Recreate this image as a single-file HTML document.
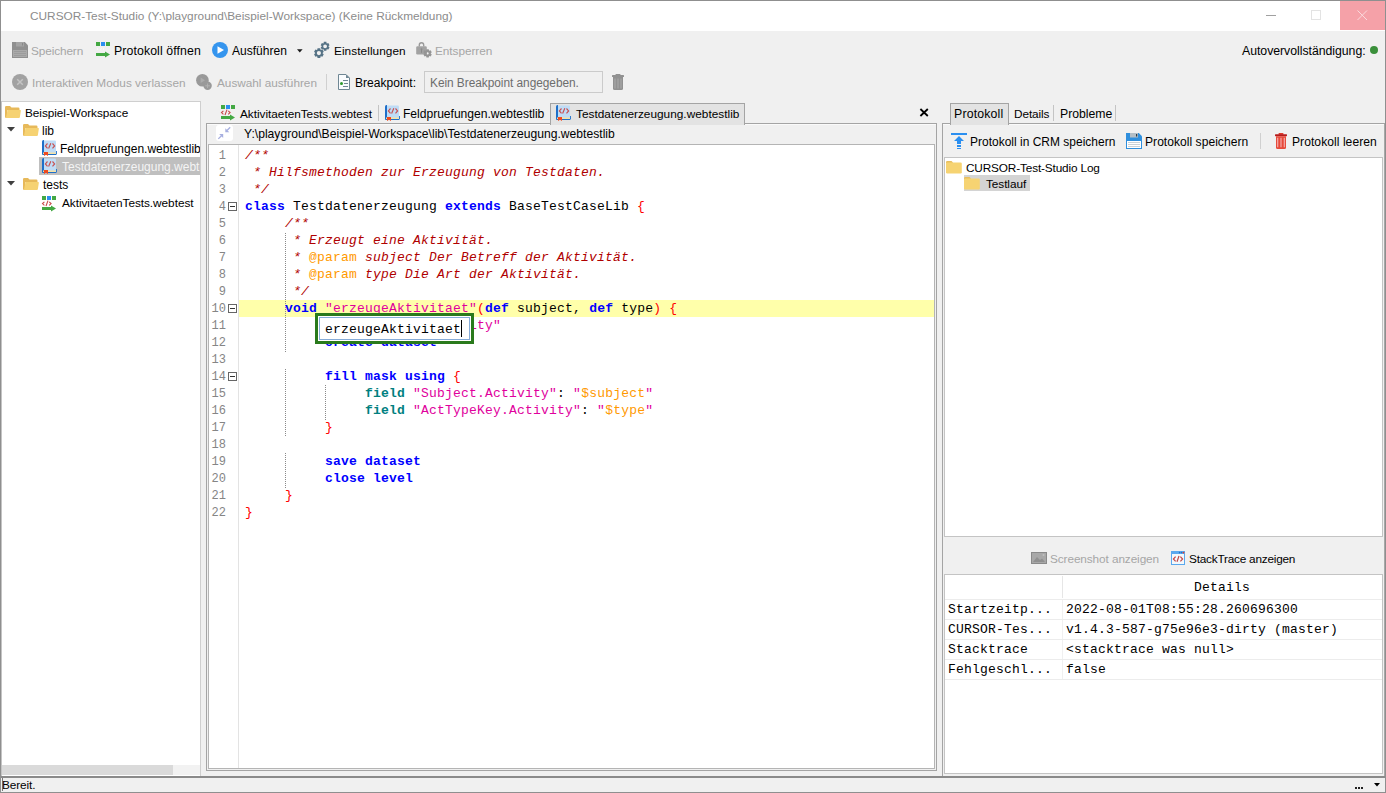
<!DOCTYPE html>
<html><head><meta charset="utf-8">
<style>
*{box-sizing:border-box;margin:0;padding:0}
html,body{width:1386px;height:793px;overflow:hidden;background:#f0f0f0}
body{position:relative;font-family:"Liberation Sans",sans-serif;font-size:12px;color:#000}
.a{position:absolute}
svg{position:absolute;overflow:visible}
.t{position:absolute;white-space:pre;line-height:20px;font-family:"Liberation Sans",sans-serif}
.code{position:absolute;white-space:pre;font-family:"Liberation Mono",monospace;font-size:13px;line-height:17px;letter-spacing:0.2px}
.k{color:#0000ff;font-weight:bold}
.f{color:#008080;font-weight:bold}
.s{color:#e0009c}
.v{color:#ff9900}
.b{color:#ff0000}
.c{color:#b00000;font-style:italic}
.p{color:#ff9900}
.ln{position:absolute;white-space:pre;font-family:"Liberation Mono",monospace;font-size:12px;line-height:17px;color:#858585}
</style></head><body>
<div class="a" style="left:0;top:0;width:1386px;height:793px;border:1px solid #8f8f8f"></div>
<div class="a" style="left:1px;top:1px;width:1384px;height:30px;background:#fff"></div>
<div class="t" style="left:30px;top:6px;font-size:11.83px;letter-spacing:0.0px;color:#8c8c8c;">CURSOR-Test-Studio (Y:\playground\Beispiel-Workspace) (Keine Rückmeldung)</div>
<div class="a" style="left:1266px;top:15px;width:10px;height:1px;background:#a0a0a0"></div>
<div class="a" style="left:1311px;top:10px;width:10px;height:10px;border:1px solid #e3e3e3"></div>
<div class="a" style="left:1340px;top:1px;width:45px;height:29px;background:#f5a1a8"></div>
<svg style="left:1357px;top:10px" width="11" height="11"><path d="M0.5 0.5L10 10M10 0.5L0.5 10" stroke="#fadadd" stroke-width="1"/></svg>
<svg style="left:12px;top:42px" width="16" height="16"><path d="M0 0H12.8L16 3.2V16H0Z" fill="#909090"/><rect x="4" y="0" width="8" height="4.5" fill="#a4a4a4"/><rect x="10" y="1" width="1" height="2.5" fill="#888"/><rect x="1" y="8" width="14" height="7" fill="#aaaaaa"/><path d="M2 9.5H14M2 11.5H14M2 13.5H14" stroke="#9c9c9c" stroke-width="1"/></svg>
<div class="t" style="left:31px;top:41px;font-size:11.8px;letter-spacing:-0.112px;color:#a6a6a6;">Speichern</div>
<svg style="left:96px;top:42px" width="16" height="16"><rect x="0" y="0" width="4" height="4" fill="#43a843"/><rect x="5" y="0" width="4" height="4" fill="#2b8ff0"/><rect x="10" y="0" width="4" height="4" fill="#43a843"/><path d="M0 11H9V9.5L14 12.5L9 15.5V14H0Z" fill="#43a843"/><path d="M2 6L1 7L2 8M6 6L4 8M7 6L8 7L7 8" stroke="#ffffff" stroke-width="0.8" fill="none" opacity="0.7"/></svg>
<div class="t" style="left:114px;top:41px;font-size:12.3px;letter-spacing:0.1px;color:#000;">Protokoll öffnen</div>
<svg style="left:212px;top:42px" width="16" height="16"><circle cx="8" cy="8" r="8" fill="#3595ee"/><path d="M5.5 4.2L12 8L5.5 11.8Z" fill="#fff"/></svg>
<div class="t" style="left:232px;top:41px;font-size:12.02px;letter-spacing:0.013px;color:#000;">Ausführen</div>
<svg style="left:297px;top:49px" width="6" height="4"><path d="M0 0.2H5.6L2.8 3.4Z" fill="#1a1a1a"/></svg>
<svg style="left:310px;top:40px" width="24" height="20"><path fill-rule="evenodd" d="M19.55 7.45 L18.33 9.58 L16.96 9.15 L16.64 9.33 L16.33 10.73 L13.87 10.73 L13.56 9.33 L13.24 9.15 L11.87 9.58 L10.65 7.45 L11.70 6.48 L11.70 6.12 L10.65 5.15 L11.87 3.02 L13.24 3.45 L13.56 3.27 L13.87 1.87 L16.33 1.87 L16.64 3.27 L16.96 3.45 L18.33 3.02 L19.55 5.15 L18.50 6.12 L18.50 6.48Z M17.00 6.30 A1.9 1.9 0 1 0 13.20 6.30 A1.9 1.9 0 1 0 17.00 6.30Z" fill="#557285"/><path fill-rule="evenodd" d="M13.74 14.35 L12.41 16.66 L10.92 16.20 L10.58 16.40 L10.23 17.92 L7.57 17.92 L7.22 16.40 L6.88 16.20 L5.39 16.66 L4.06 14.35 L5.21 13.30 L5.21 12.90 L4.06 11.85 L5.39 9.54 L6.88 10.00 L7.22 9.80 L7.57 8.28 L10.23 8.28 L10.58 9.80 L10.92 10.00 L12.41 9.54 L13.74 11.85 L12.59 12.90 L12.59 13.30Z M11.00 13.10 A2.1 2.1 0 1 0 6.80 13.10 A2.1 2.1 0 1 0 11.00 13.10Z" fill="#557285"/></svg>
<div class="t" style="left:334px;top:41px;font-size:11.8px;letter-spacing:0.067px;color:#000;">Einstellungen</div>
<svg style="left:416px;top:42px" width="18" height="18"><path d="M3.3 4.6V2.9A2.2 2.2 0 0 1 7.7 2.9V4.6" stroke="#9a9a9a" stroke-width="1.4" fill="none"/><rect x="0.2" y="4.2" width="10.6" height="8.4" rx="1.3" fill="#a2a2a2"/><rect x="5" y="7" width="1" height="3.8" fill="#8a8a8a"/><circle cx="5.5" cy="7.2" r="0.9" fill="#8a8a8a"/><path fill-rule="evenodd" d="M15.76 12.48 L14.62 14.47 L13.34 14.07 L13.04 14.24 L12.75 15.54 L10.45 15.54 L10.16 14.24 L9.86 14.07 L8.58 14.47 L7.44 12.48 L8.42 11.57 L8.42 11.23 L7.44 10.32 L8.58 8.33 L9.86 8.73 L10.16 8.56 L10.45 7.26 L12.75 7.26 L13.04 8.56 L13.34 8.73 L14.62 8.33 L15.76 10.32 L14.78 11.23 L14.78 11.57Z M12.70 11.40 A1.1 1.1 0 1 0 10.50 11.40 A1.1 1.1 0 1 0 12.70 11.40Z" fill="#959595"/></svg>
<div class="t" style="left:435px;top:41px;font-size:11.8px;letter-spacing:-0.056px;color:#a6a6a6;">Entsperren</div>
<div class="t" style="left:1242px;top:41px;font-size:12.3px;letter-spacing:-0.038px;color:#000;">Autovervollständigung:</div>
<div class="a" style="left:1370px;top:46px;width:8px;height:8px;border-radius:50%;background:#3a8f3a"></div>
<svg style="left:12px;top:74px" width="16" height="16"><circle cx="8" cy="8" r="8" fill="#a2a2a2"/><path d="M5.2 5.2L10.8 10.8M10.8 5.2L5.2 10.8" stroke="#c4c4c4" stroke-width="1.5"/></svg>
<div class="t" style="left:32px;top:73px;font-size:11.8px;letter-spacing:0.007px;color:#a6a6a6;">Interaktiven Modus verlassen</div>
<svg style="left:195px;top:74px" width="18" height="17"><circle cx="7.4" cy="6.3" r="6.3" fill="#999"/><path d="M5.6 3.6L10 6.3L5.6 9Z" fill="#acacac"/><circle cx="12.6" cy="11.8" r="4.2" fill="#999"/><path d="M12.6 9.5V14.1M10.3 11.8H14.9" stroke="#b4b4b4" stroke-width="0.9"/></svg>
<div class="t" style="left:217px;top:73px;font-size:11.8px;letter-spacing:-0.025px;color:#a6a6a6;">Auswahl ausführen</div>
<div class="a" style="left:326px;top:74px;width:1px;height:16px;background:#d0d0d0"></div>
<svg style="left:338px;top:74px" width="12" height="16"><path d="M0.5 0.5H8L11.5 4V15.5H0.5Z" fill="#fafcfe" stroke="#6f8794" stroke-width="1"/><path d="M8 0.5V4H11.5Z" fill="#6f8794"/><circle cx="3.5" cy="9.5" r="1.5" fill="#2e9a2e"/><path d="M5 6.5H10M6 9.5H10M5 12.5H10" stroke="#6f8794" stroke-width="1"/></svg>
<div class="t" style="left:355px;top:73px;font-size:12.04px;letter-spacing:0.02px;color:#000;">Breakpoint:</div>
<div class="a" style="left:424px;top:71px;width:179px;height:22px;border:1px solid #cbcbcb;background:#f0f0f0"></div>
<div class="t" style="left:430px;top:73px;font-size:11.86px;letter-spacing:-0.032px;color:#6d6d6d;">Kein Breakpoint angegeben.</div>
<svg style="left:612px;top:74px" width="12" height="16"><rect x="0" y="1" width="12" height="2" rx="0.6" fill="#919191"/><rect x="3.5" y="0" width="5" height="1.6" rx="0.5" fill="#919191"/><path d="M1 3H11V14.5Q11 16 9.5 16H2.5Q1 16 1 14.5Z" fill="#919191"/><path d="M3 4.5V14.5M6 4.5V14.5M9 4.5V14.5" stroke="#a9a9a9" stroke-width="1.1"/></svg>
<div class="a" style="left:1px;top:101px;width:200px;height:676px;background:#fff;border-top:1px solid #cfcfcf;border-right:1px solid #cfcfcf"></div>
<svg style="left:5px;top:106px" width="16" height="13"><path d="M0 1.2Q0 0 1.2 0H5L6.5 1.5H13.3Q14.5 1.5 14.5 2.7V4H2.5L1.8 12H1.2Q0 12 0 10.8Z" fill="#e7b95a"/><path d="M2.6 4H15.2Q16 4 15.85 4.8L14.85 11.2Q14.7 12 13.9 12H1.8Q1 12 1.1 11.2Z" fill="#f6d272"/></svg>
<div class="t" style="left:25px;top:103px;font-size:11.8px;letter-spacing:-0.047px;color:#000;">Beispiel-Workspace</div>
<svg style="left:7px;top:127px" width="9" height="5"><path d="M0 0H8L4 4.5Z" fill="#404040"/></svg>
<svg style="left:23px;top:124px" width="16" height="13"><path d="M0 1.2Q0 0 1.2 0H5L6.5 1.5H13.3Q14.5 1.5 14.5 2.7V4H2.5L1.8 12H1.2Q0 12 0 10.8Z" fill="#e7b95a"/><path d="M2.6 4H15.2Q16 4 15.85 4.8L14.85 11.2Q14.7 12 13.9 12H1.8Q1 12 1.1 11.2Z" fill="#f6d272"/></svg>
<div class="t" style="left:42px;top:121px;font-size:12.0px;letter-spacing:0.0px;color:#000;">lib</div>
<svg style="left:42px;top:140px" width="15" height="16"><rect x="0.5" y="0.5" width="13.5" height="13" rx="1.2" fill="#bfdcf6"/><path d="M0 1.5Q0 0 1.5 0H2V14H0Z" fill="#1e6fc9"/><path d="M1 12.5H14V14.5H1Z" fill="#f5e2a6"/><path d="M0.5 11.5V14.5H14" fill="none" stroke="#1e6fc9" stroke-width="1"/><rect x="14" y="11" width="0.9" height="3.5" fill="#1e6fc9"/><path d="M2 12H6V16L4 14.8L2 16Z" fill="#f04a1e"/><path d="M5.5 3.5L3.4 5.9L5.5 8.3M8.8 3.2L6.6 8.5M10.5 3.5L12.6 5.9L10.5 8.3" stroke="#c85050" stroke-width="1.15" fill="none"/></svg>
<div class="a" style="left:0;top:0;width:200px;height:776px;overflow:hidden">
<div class="t" style="left:60px;top:139px;font-size:12.0px;letter-spacing:0.0px;color:#000;">Feldpruefungen.webtestlib</div>
<div class="a" style="left:39px;top:157px;width:161px;height:18px;background:#bfbfbf"></div>
<div class="t" style="left:62px;top:157px;font-size:12.0px;letter-spacing:0.0px;color:#f4f4f4;">Testdatenerzeugung.webtestlib</div>
</div>
<svg style="left:42px;top:158px" width="15" height="16"><rect x="0.5" y="0.5" width="13.5" height="13" rx="1.2" fill="#bfdcf6"/><path d="M0 1.5Q0 0 1.5 0H2V14H0Z" fill="#1e6fc9"/><path d="M1 12.5H14V14.5H1Z" fill="#f5e2a6"/><path d="M0.5 11.5V14.5H14" fill="none" stroke="#1e6fc9" stroke-width="1"/><rect x="14" y="11" width="0.9" height="3.5" fill="#1e6fc9"/><path d="M2 12H6V16L4 14.8L2 16Z" fill="#f04a1e"/><path d="M5.5 3.5L3.4 5.9L5.5 8.3M8.8 3.2L6.6 8.5M10.5 3.5L12.6 5.9L10.5 8.3" stroke="#c85050" stroke-width="1.15" fill="none"/></svg>
<svg style="left:7px;top:181px" width="9" height="5"><path d="M0 0H8L4 4.5Z" fill="#404040"/></svg>
<svg style="left:23px;top:178px" width="16" height="13"><path d="M0 1.2Q0 0 1.2 0H5L6.5 1.5H13.3Q14.5 1.5 14.5 2.7V4H2.5L1.8 12H1.2Q0 12 0 10.8Z" fill="#e7b95a"/><path d="M2.6 4H15.2Q16 4 15.85 4.8L14.85 11.2Q14.7 12 13.9 12H1.8Q1 12 1.1 11.2Z" fill="#f6d272"/></svg>
<div class="t" style="left:43px;top:175px;font-size:12.0px;letter-spacing:0.0px;color:#000;">tests</div>
<svg style="left:42px;top:196px" width="16" height="16"><rect x="0" y="0" width="4" height="4" fill="#43a843"/><rect x="5" y="0" width="4" height="4" fill="#2b8ff0"/><rect x="10" y="0" width="4" height="4" fill="#43a843"/><path d="M2.4 5.8L0.5 7.6L2.4 9.4M6 4.6L4 10M7.2 5.8L9.1 7.6L7.2 9.4" stroke="#c84a4a" stroke-width="1.1" fill="none"/><path d="M0 11H9V9.5L14 12.5L9 15.5V14H0Z" fill="#43a843"/></svg>
<div class="t" style="left:62px;top:193px;font-size:11.8px;letter-spacing:-0.038px;color:#000;">AktivitaetenTests.webtest</div>
<div class="a" style="left:1px;top:101px;width:1px;height:676px;background:#c4c4c4"></div>
<div class="a" style="left:2px;top:765px;width:198px;height:10px;background:#f2f2f2"></div>
<div class="a" style="left:2px;top:765px;width:171px;height:10px;background:#dadada"></div>
<svg style="left:221px;top:105px" width="16" height="16"><rect x="0" y="0" width="4" height="4" fill="#43a843"/><rect x="5" y="0" width="4" height="4" fill="#2b8ff0"/><rect x="10" y="0" width="4" height="4" fill="#43a843"/><path d="M2.4 5.8L0.5 7.6L2.4 9.4M6 4.6L4 10M7.2 5.8L9.1 7.6L7.2 9.4" stroke="#c84a4a" stroke-width="1.1" fill="none"/><path d="M0 11H9V9.5L14 12.5L9 15.5V14H0Z" fill="#43a843"/></svg>
<div class="t" style="left:240px;top:104px;font-size:11.8px;letter-spacing:-0.021px;color:#000;">AktivitaetenTests.webtest</div>
<div class="a" style="left:378px;top:105px;width:1px;height:16px;background:#c4c4c4"></div>
<svg style="left:385px;top:105px" width="15" height="16"><rect x="0.5" y="0.5" width="13.5" height="13" rx="1.2" fill="#bfdcf6"/><path d="M0 1.5Q0 0 1.5 0H2V14H0Z" fill="#1e6fc9"/><path d="M1 12.5H14V14.5H1Z" fill="#f5e2a6"/><path d="M0.5 11.5V14.5H14" fill="none" stroke="#1e6fc9" stroke-width="1"/><rect x="14" y="11" width="0.9" height="3.5" fill="#1e6fc9"/><path d="M2 12H6V16L4 14.8L2 16Z" fill="#f04a1e"/><path d="M5.5 3.5L3.4 5.9L5.5 8.3M8.8 3.2L6.6 8.5M10.5 3.5L12.6 5.9L10.5 8.3" stroke="#c85050" stroke-width="1.15" fill="none"/></svg>
<div class="t" style="left:403px;top:104px;font-size:12.11px;letter-spacing:-0.029px;color:#000;">Feldpruefungen.webtestlib</div>
<div class="a" style="left:206px;top:123px;width:731px;height:648px;border:1px solid #a4a4a4;background:#f0f0f0"></div>
<div class="a" style="left:207px;top:124px;width:729px;height:1px;background:#fafafa"></div>
<div class="a" style="left:550px;top:103px;width:195px;height:22px;border:1px solid #a4a4a4;border-bottom:none;background:#e3e3e3"></div>
<svg style="left:556px;top:105px" width="15" height="16"><rect x="0.5" y="0.5" width="13.5" height="13" rx="1.2" fill="#bfdcf6"/><path d="M0 1.5Q0 0 1.5 0H2V14H0Z" fill="#1e6fc9"/><path d="M1 12.5H14V14.5H1Z" fill="#f5e2a6"/><path d="M0.5 11.5V14.5H14" fill="none" stroke="#1e6fc9" stroke-width="1"/><rect x="14" y="11" width="0.9" height="3.5" fill="#1e6fc9"/><path d="M2 12H6V16L4 14.8L2 16Z" fill="#f04a1e"/><path d="M5.5 3.5L3.4 5.9L5.5 8.3M8.8 3.2L6.6 8.5M10.5 3.5L12.6 5.9L10.5 8.3" stroke="#c85050" stroke-width="1.15" fill="none"/></svg>
<div class="t" style="left:576px;top:104px;font-size:11.82px;letter-spacing:0.018px;color:#000;">Testdatenerzeugung.webtestlib</div>
<svg style="left:920px;top:109px" width="9" height="8"><path d="M0.4 0L7.8 7M7.8 0L0.4 7" stroke="#000" stroke-width="1.8"/></svg>
<div class="a" style="left:216px;top:125px;width:17px;height:16px;border-radius:3px;background:#fff"></div>
<svg style="left:216px;top:125px" width="17" height="16"><path d="M9.3 7.2V3.2L13.3 7.2Z" fill="#a7afe0"/><path d="M11 5.5L14.2 2.3" stroke="#a7afe0" stroke-width="1.3"/><path d="M7.2 9V13L3.2 9Z" fill="#a7afe0"/><path d="M5.5 10.7L2.3 13.9" stroke="#a7afe0" stroke-width="1.3"/></svg>
<div class="t" style="left:244px;top:124px;font-size:12.14px;letter-spacing:0.005px;color:#000;">Y:\playground\Beispiel-Workspace\lib\Testdatenerzeugung.webtestlib</div>
<div class="a" style="left:208px;top:144px;width:727px;height:625px;border:1px solid #b4b4b4;background:#fff"></div>
<div class="a" style="left:238px;top:145px;width:1px;height:623px;background:#e3e3e3"></div>
<div class="a" style="left:239px;top:300px;width:695px;height:17px;background:#ffffaa"></div>
<div class="a" style="left:285px;top:233px;width:1px;height:119px;background:repeating-linear-gradient(#8a8a8a 0 1px,transparent 1px 2px)"></div>
<div class="a" style="left:285px;top:369px;width:1px;height:68px;background:repeating-linear-gradient(#8a8a8a 0 1px,transparent 1px 2px)"></div>
<div class="a" style="left:285px;top:453px;width:1px;height:35px;background:repeating-linear-gradient(#8a8a8a 0 1px,transparent 1px 2px)"></div>
<div class="a" style="left:325px;top:385px;width:1px;height:35px;background:repeating-linear-gradient(#8a8a8a 0 1px,transparent 1px 2px)"></div>
<div class="ln" style="left:218.8px;top:148px">1</div>
<div class="ln" style="left:218.8px;top:165px">2</div>
<div class="ln" style="left:218.8px;top:182px">3</div>
<div class="ln" style="left:218.8px;top:199px">4</div>
<div class="ln" style="left:218.8px;top:216px">5</div>
<div class="ln" style="left:218.8px;top:233px">6</div>
<div class="ln" style="left:218.8px;top:250px">7</div>
<div class="ln" style="left:218.8px;top:267px">8</div>
<div class="ln" style="left:218.8px;top:284px">9</div>
<div class="ln" style="left:211.6px;top:301px">10</div>
<div class="ln" style="left:211.6px;top:318px">11</div>
<div class="ln" style="left:211.6px;top:335px">12</div>
<div class="ln" style="left:211.6px;top:352px">13</div>
<div class="ln" style="left:211.6px;top:369px">14</div>
<div class="ln" style="left:211.6px;top:386px">15</div>
<div class="ln" style="left:211.6px;top:403px">16</div>
<div class="ln" style="left:211.6px;top:420px">17</div>
<div class="ln" style="left:211.6px;top:437px">18</div>
<div class="ln" style="left:211.6px;top:454px">19</div>
<div class="ln" style="left:211.6px;top:471px">20</div>
<div class="ln" style="left:211.6px;top:488px">21</div>
<div class="ln" style="left:211.6px;top:505px">22</div>
<svg style="left:228px;top:202px" width="9" height="9"><rect x="0.5" y="0.5" width="8" height="8" fill="#fff" stroke="#666" stroke-width="1"/><path d="M2 4.5H7" stroke="#333" stroke-width="1"/></svg>
<svg style="left:228px;top:304px" width="9" height="9"><rect x="0.5" y="0.5" width="8" height="8" fill="#fff" stroke="#666" stroke-width="1"/><path d="M2 4.5H7" stroke="#333" stroke-width="1"/></svg>
<svg style="left:228px;top:372px" width="9" height="9"><rect x="0.5" y="0.5" width="8" height="8" fill="#fff" stroke="#666" stroke-width="1"/><path d="M2 4.5H7" stroke="#333" stroke-width="1"/></svg>
<div class="code" style="left:245px;top:147px"><span class="c">/**</span>
<span class="c"> * Hilfsmethoden zur Erzeugung von Testdaten.</span>
<span class="c"> */</span>
<span class="k">class</span> Testdatenerzeugung <span class="k">extends</span> BaseTestCaseLib <span class="b">{</span>
     <span class="c">/**</span>
     <span class="c"> * Erzeugt eine Aktivität.</span>
     <span class="c"> * </span><span class="p">@param</span><span class="c"> subject Der Betreff der Aktivität.</span>
     <span class="c"> * </span><span class="p">@param</span><span class="c"> type Die Art der Aktivität.</span>
     <span class="c"> */</span>
     <span class="k">void</span> <span class="s">"erzeugeAktivitaet"</span><span class="b">(</span><span class="k">def</span> subject, <span class="k">def</span> type<span class="b">)</span> <span class="b">{</span>
          <span class="k">create mask</span> <span class="s">"Activity"</span>
          <span class="k">create dataset</span>

          <span class="k">fill mask using</span> <span class="b">{</span>
               <span class="f">field</span> <span class="s">"Subject.Activity"</span>: <span class="s">"</span><span class="v">$subject</span><span class="s">"</span>
               <span class="f">field</span> <span class="s">"ActTypeKey.Activity"</span>: <span class="s">"</span><span class="v">$type</span><span class="s">"</span>
          <span class="b">}</span>

          <span class="k">save dataset</span>
          <span class="k">close level</span>
     <span class="b">}</span>
<span class="b">}</span></div>
<div class="a" style="left:315px;top:313px;width:159px;height:31px;border:3px solid #2a7a1c;background:#fff"></div>
<div class="a" style="left:319px;top:317px;width:151px;height:23px;border:1px solid #86acd8;background:#fff"></div>
<div class="code" style="left:325px;top:321px;color:#000">erzeugeAktivitaet</div>
<div class="a" style="left:461px;top:320px;width:1px;height:17px;background:#000"></div>
<div class="a" style="left:942px;top:123px;width:443px;height:654px;border:1px solid #a4a4a4;border-right:none;border-bottom:none;background:#f0f0f0"></div>
<div class="a" style="left:943px;top:124px;width:441px;height:1px;background:#fafafa"></div>
<div class="a" style="left:1384px;top:124px;width:1px;height:653px;background:#a8a8a8"></div>
<div class="a" style="left:950px;top:103px;width:59px;height:22px;border:1px solid #a4a4a4;border-bottom:none;background:#e3e3e3"></div>
<div class="t" style="left:954px;top:104px;font-size:12.3px;letter-spacing:0.175px;color:#000;">Protokoll</div>
<div class="t" style="left:1014px;top:104px;font-size:11.8px;letter-spacing:-0.1px;color:#000;">Details</div>
<div class="a" style="left:1053px;top:105px;width:1px;height:16px;background:#c4c4c4"></div>
<div class="t" style="left:1060px;top:104px;font-size:12.24px;letter-spacing:0.0px;color:#000;">Probleme</div>
<div class="a" style="left:1115px;top:105px;width:1px;height:16px;background:#c4c4c4"></div>
<svg style="left:951px;top:133px" width="16" height="16"><rect x="0" y="0" width="16" height="2" fill="#2b8ff0"/><path d="M8 3L13 8H10V11H6V8H3Z" fill="#2b8ff0"/><rect x="6" y="12" width="4" height="2" fill="#2b8ff0"/><rect x="6" y="15" width="4" height="1" fill="#2b8ff0"/></svg>
<div class="t" style="left:970px;top:132px;font-size:11.96px;letter-spacing:0.02px;color:#000;">Protokoll in CRM speichern</div>
<svg style="left:1126px;top:133px" width="16" height="16"><path d="M0 0H12.8L16 3.2V16H0Z" fill="#2f8fdd"/><rect x="4" y="0" width="8" height="4.5" fill="#b3bec6"/><rect x="10" y="1" width="1.2" height="2.5" fill="#2b3a44"/><rect x="1" y="8" width="14" height="7" fill="#ffffff"/><path d="M2 9.5H14M2 11.5H14M2 13.5H14" stroke="#c9d1d6" stroke-width="1"/></svg>
<div class="t" style="left:1145px;top:132px;font-size:12.07px;letter-spacing:0.033px;color:#000;">Protokoll speichern</div>
<div class="a" style="left:1260px;top:133px;width:1px;height:16px;background:#d0d0d0"></div>
<svg style="left:1275px;top:133px" width="13" height="16"><rect x="3.5" y="0" width="5" height="1.8" rx="0.8" fill="#e0392c"/><rect x="0" y="1.2" width="12" height="2" rx="0.6" fill="#b51b1b"/><path d="M1 3.2H11V14.5Q11 16 9.5 16H2.5Q1 16 1 14.5Z" fill="#e64a3a"/><path d="M2.7 4.8V14.2M6 4.8V14.2M9.3 4.8V14.2" stroke="#f6aaaa" stroke-width="1.2"/></svg>
<div class="t" style="left:1292px;top:132px;font-size:12.1px;letter-spacing:0.047px;color:#000;">Protokoll leeren</div>
<div class="a" style="left:944px;top:157px;width:439px;height:380px;border:1px solid #c4c4c4;background:#fff"></div>
<svg style="left:946px;top:161px" width="16" height="13"><path d="M0 2.5V1.2Q0 0 1.2 0H5.5L7 1.5V2.5Z" fill="#e8be5f"/><rect x="0" y="1.5" width="15.8" height="11" rx="1.3" fill="#f6d372"/></svg>
<div class="t" style="left:966px;top:158px;font-size:11.8px;letter-spacing:-0.148px;color:#000;">CURSOR-Test-Studio Log</div>
<div class="a" style="left:964px;top:175px;width:66px;height:16px;background:#d4d4d4"></div>
<svg style="left:964px;top:177px" width="16" height="13"><path d="M0 2.5V1.2Q0 0 1.2 0H5.5L7 1.5V2.5Z" fill="#e8be5f"/><rect x="0" y="1.5" width="15.8" height="11" rx="1.3" fill="#f6d372"/></svg>
<div class="t" style="left:986px;top:174px;font-size:11.8px;letter-spacing:-0.071px;color:#000;">Testlauf</div>
<svg style="left:1031px;top:552px" width="16" height="12"><rect x="0.5" y="0.5" width="15" height="11" fill="#a8a8a8" stroke="#8a8a8a" stroke-width="1"/><path d="M2 10L6 5L9 8L11 6.5L14 10Z" fill="#909090"/><circle cx="12.5" cy="3" r="1" fill="#c0c0c0"/></svg>
<div class="t" style="left:1050px;top:549px;font-size:11.8px;letter-spacing:-0.094px;color:#a6a6a6;">Screenshot anzeigen</div>
<svg style="left:1171px;top:551px" width="14" height="14"><rect x="0.5" y="0.5" width="13" height="13" fill="#f3f8fb" stroke="#5aa8ee" stroke-width="1"/><rect x="0" y="0" width="14" height="3" fill="#5aa8ee"/><circle cx="8.6" cy="1.6" r="0.8" fill="#1f6fc6"/><circle cx="10.6" cy="1.6" r="0.8" fill="#1f6fc6"/><circle cx="12.5" cy="1.6" r="0.9" fill="#e23c2c"/><path d="M4.6 5.6L2.4 8L4.6 10.3M8 5L6 10.8M9.4 5.6L11.6 8L9.4 10.3" stroke="#c44848" stroke-width="1.2" fill="none"/></svg>
<div class="t" style="left:1189px;top:549px;font-size:11.8px;letter-spacing:-0.222px;color:#000;">StackTrace anzeigen</div>
<div class="a" style="left:944px;top:574px;width:439px;height:200px;border:1px solid #c4c4c4;background:#fff"></div>
<div class="a" style="left:1062px;top:576px;width:1px;height:22px;background:#e6e6e6"></div>
<div class="a" style="left:1062px;top:600px;width:1px;height:80px;background:#f0f0f0"></div>
<div class="a" style="left:945px;top:599px;width:437px;height:1px;background:#ececec"></div>
<div class="a" style="left:945px;top:619px;width:437px;height:1px;background:#ececec"></div>
<div class="a" style="left:945px;top:639px;width:437px;height:1px;background:#ececec"></div>
<div class="a" style="left:945px;top:659px;width:437px;height:1px;background:#ececec"></div>
<div class="a" style="left:945px;top:679px;width:437px;height:1px;background:#ececec"></div>
<div class="code" style="left:1194px;top:579px">Details</div>
<div class="code" style="left:948px;top:601px">Startzeitp...</div>
<div class="code" style="left:1066px;top:601px">2022-08-01T08:55:28.260696300</div>
<div class="code" style="left:948px;top:621px">CURSOR-Tes...</div>
<div class="code" style="left:1066px;top:621px">v1.4.3-587-g75e96e3-dirty (master)</div>
<div class="code" style="left:948px;top:641px">Stacktrace</div>
<div class="code" style="left:1066px;top:641px">&lt;stacktrace was null&gt;</div>
<div class="code" style="left:948px;top:661px">Fehlgeschl...</div>
<div class="code" style="left:1066px;top:661px">false</div>
<div class="a" style="left:1px;top:776px;width:1384px;height:2px;background:#8a8a8a"></div>
<div class="a" style="left:2px;top:778px;width:1382px;height:13px;background:#f0f0f0;border-left:1px solid #7a7a7a"></div>
<div class="t" style="left:2px;top:775px;font-size:11.8px;letter-spacing:-0.083px;color:#000;">Bereit.</div>
<div class="a" style="left:1355px;top:787px;width:2px;height:2px;background:#222"></div>
<div class="a" style="left:1358px;top:787px;width:2px;height:2px;background:#222"></div>
<div class="a" style="left:1361px;top:787px;width:2px;height:2px;background:#222"></div>
<svg style="left:1374px;top:783px" width="6" height="4"><path d="M0 0H6L3 3.5Z" fill="#000"/></svg>
</body></html>
